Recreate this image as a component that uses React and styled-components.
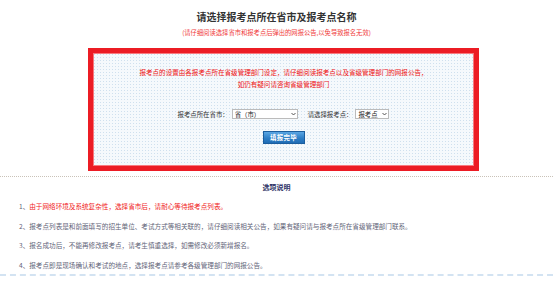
import React from 'react';
import styled, { createGlobalStyle } from 'styled-components';

const GlobalStyle = createGlobalStyle`
  body {
    margin: 0;
    background: #fff;
    font-family: "Noto Sans CJK SC", "Liberation Sans", sans-serif;
  }
`;

const Page = styled.div`
  width: 553px;
  height: 283px;
  overflow: hidden;
  padding-top: 11px;
  box-sizing: border-box;
`;

const Title = styled.h1`
  margin: 0;
  text-align: center;
  font-size: 10px;
  line-height: 12px;
  font-weight: 700;
  color: #333;
`;

const Sub = styled.p`
  margin: 6px 0 0;
  text-align: center;
  font-size: 6.3px;
  line-height: 8px;
  color: #f03a3a;
`;

const Box = styled.div`
  margin: 11px 0 0 88px;
  width: 391px;
  height: 123px;
  box-sizing: border-box;
  border: 5px solid #ec1c24;
  box-shadow: inset 0 0 0 1px #f77a7f;
  background-color: #f5f9fc;
  background-image: radial-gradient(#cfe0ee 0.6px, transparent 0.9px);
  background-size: 3px 3px;
  display: flex;
  flex-direction: column;
  align-items: center;
  padding-top: 13px;
`;

const Notice = styled.p`
  margin: 0;
  font-size: 6.55px;
  line-height: 12px;
  color: #f01010;
  text-align: center;
`;

const Row = styled.div`
  display: flex;
  align-items: center;
  margin-top: 19px;
  height: 10px;
  font-size: 6.4px;
  color: #333;
`;

const Label = styled.span`
  margin-right: 3px;
  margin-left: ${p => p.$gap || 0}px;
`;

const SelectWrap = styled.div`
  position: relative;
  width: ${p => p.$w}px;
  height: 10px;
`;

const Select = styled.select`
  appearance: none;
  width: 100%;
  height: 100%;
  box-sizing: border-box;
  border: 1px solid #bbb;
  background: #fff;
  font-family: inherit;
  font-size: 6.4px;
  color: #222;
  padding: 0 0 0 2px;
  margin: 0;
  outline: none;
`;

const Chevron = styled.svg`
  position: absolute;
  right: 2px;
  top: 3px;
  width: 5px;
  height: 4px;
  pointer-events: none;
`;

const Button = styled.button`
  margin-top: 12px;
  width: 42px;
  height: 13px;
  padding: 0;
  border: 1px solid #1c5e9e;
  background: linear-gradient(#5aa6e3, #2f7fc6 55%, #1f6cb5);
  color: #fff;
  font-family: inherit;
  font-size: 6.4px;
  font-weight: 700;
  line-height: 11px;
  letter-spacing: 0.3px;
`;

const Divider = styled.div`
  margin-top: 5px;
  border-top: 1px dotted #c9c2b8;
`;

const SectionTitle = styled.h2`
  margin: 5px 0 0;
  text-align: center;
  font-size: 7px;
  line-height: 10px;
  font-weight: 700;
  color: #2e3366;
`;

const List = styled.ol`
  list-style: none;
  margin: 10px 0 0;
  padding: 0 0 0 19px;
`;

const Item = styled.li`
  font-size: 6.6px;
  line-height: 8px;
  height: 8px;
  margin-bottom: 11.6px;
  color: #5f6478;
`;

const Warn = styled.span`
  color: #f01818;
`;

const Bottom = styled.div`
  margin-top: -6px;
  border-top: 2px dashed #d3e3f2;
`;

const arrow = (
  <Chevron viewBox="0 0 5 4">
    <path d="M0.5 1 L2.5 3 L4.5 1" fill="none" stroke="#444" strokeWidth="0.9" />
  </Chevron>
);

export default function App() {
  return (
    <Page>
      <GlobalStyle />
      <Title>请选择报考点所在省市及报考点名称</Title>
      <Sub>(请仔细阅读选择省市和报考点后弹出的网报公告,以免导致报名无效)</Sub>
      <Box>
        <Notice>报考点的设置由各报考点所在省级管理部门设定，请仔细阅读报考点以及省级管理部门的网报公告，</Notice>
        <Notice>如仍有疑问请咨询省级管理部门</Notice>
        <Row>
          <Label>报考点所在省市：</Label>
          <SelectWrap $w={66}>
            <Select defaultValue="">
              <option value="">省（市）</option>
            </Select>
            {arrow}
          </SelectWrap>
          <Label $gap={10}>请选择报考点：</Label>
          <SelectWrap $w={34}>
            <Select defaultValue="">
              <option value="">报考点</option>
            </Select>
            {arrow}
          </SelectWrap>
        </Row>
        <Button>填报完毕</Button>
      </Box>
      <Divider />
      <SectionTitle>选项说明</SectionTitle>
      <List>
        <Item>1、<Warn>由于网络环境及系统复杂性，选择省市后，请耐心等待报考点列表。</Warn></Item>
        <Item>2、报考点列表是和前面填写的招生单位、考试方式等相关联的，请仔细阅读相关公告，如果有疑问请与报考点所在省级管理部门联系。</Item>
        <Item>3、报名成功后，不能再修改报考点，请考生慎重选择，如需修改必须新增报名。</Item>
        <Item>4、报考点即是现场确认和考试的地点，选择报考点请参考各级管理部门的网报公告。</Item>
      </List>
      <Bottom />
    </Page>
  );
}
